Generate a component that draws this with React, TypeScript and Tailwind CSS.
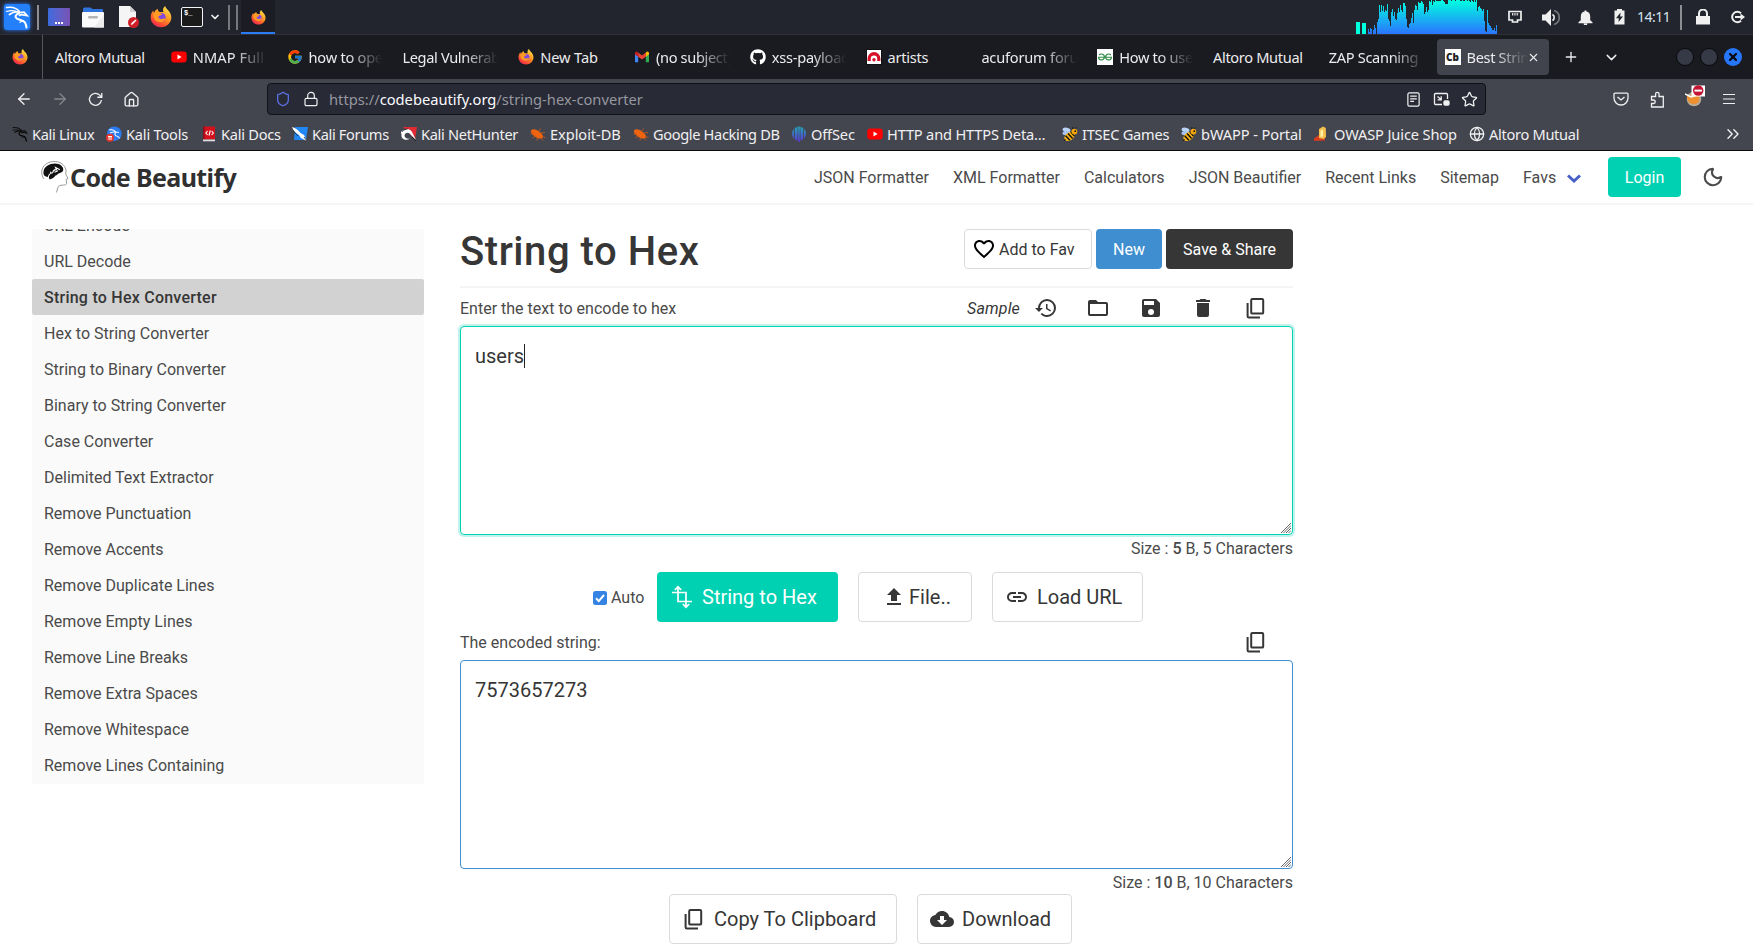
import type { ReactNode } from 'react';
import { ArrowLeft, ArrowRight, ChevronDown, ChevronsRight, Globe, House, Lock, Menu, Moon, Plus, Shield, Star, X } from 'lucide-react';
import { FaGithub } from 'react-icons/fa6';
import { FcGoogle } from 'react-icons/fc';
import { SiGeeksforgeeks } from 'react-icons/si';

/* ---------- icon helpers ---------- */

const PATHS = {
  heart: 'M12.1,18.55L12,18.65L11.89,18.55C7.14,14.24 4,11.39 4,8.5C4,6.5 5.5,5 7.5,5C9.04,5 10.54,6 11.07,7.36H12.93C13.46,6 14.96,5 16.5,5C18.5,5 20,6.5 20,8.5C20,11.39 16.86,14.24 12.1,18.55M16.5,3C14.76,3 13.09,3.81 12,5.08C10.91,3.81 9.24,3 7.5,3C4.42,3 2,5.41 2,8.5C2,12.27 5.4,15.36 10.55,20.03L12,21.35L13.45,20.03C18.6,15.36 22,12.27 22,8.5C22,5.41 19.58,3 16.5,3Z',
  history: 'M13.5,8H12V13L16.28,15.54L17,14.33L13.5,12.25V8M13,3A9,9 0 0,0 4,12H1L4.96,16.03L9,12H6A7,7 0 0,1 13,5A7,7 0 0,1 20,12A7,7 0 0,1 13,19C11.07,19 9.32,18.21 8.06,16.94L6.64,18.36C8.27,20 10.5,21 13,21A9,9 0 0,0 22,12A9,9 0 0,0 13,3',
  folder: 'M20,18H4V8H20M20,6H12L10,4H4C2.89,4 2,4.89 2,6V18A2,2 0 0,0 4,20H20A2,2 0 0,0 22,18V8C22,6.89 21.1,6 20,6Z',
  save: 'M15,9H5V5H15M12,19A3,3 0 0,1 9,16A3,3 0 0,1 12,13A3,3 0 0,1 15,16A3,3 0 0,1 12,19M17,3H5C3.89,3 3,3.9 3,5V19A2,2 0 0,0 5,21H19A2,2 0 0,0 21,19V7L17,3Z',
  trash: 'M19,4H15.5L14.5,3H9.5L8.5,4H5V6H19M6,19A2,2 0 0,0 8,21H16A2,2 0 0,0 18,19V7H6V19Z',
  upload: 'M9,10V16H15V10H19L12,3L5,10H9M19,18H5V20H19V18Z',
  link: 'M3.9,12C3.9,10.29 5.29,8.9 7,8.9H11V7H7A5,5 0 0,0 2,12A5,5 0 0,0 7,17H11V15.1H7C5.29,15.1 3.9,13.71 3.9,12M8,13H16V11H8V13M17,7H13V8.9H17C18.71,8.9 20.1,10.29 20.1,12C20.1,13.71 18.71,15.1 17,15.1H13V17H17A5,5 0 0,0 22,12A5,5 0 0,0 17,7Z',
  cloud: 'M17,13L12,18L7,13H10V9H14V13M19.35,10.03C18.67,6.59 15.64,4 12,4C9.11,4 6.6,5.64 5.35,8.03C2.34,8.36 0,10.9 0,14A6,6 0 0,0 6,20H19A5,5 0 0,0 24,15C24,12.36 21.95,10.22 19.35,10.03Z',
};

function Glyph({ name, className = 'size-6' }: { name: keyof typeof PATHS; className?: string }) {
  return (
    <svg viewBox="0 0 24 24" fill="currentColor" fillRule="evenodd" className={`shrink-0 ${className}`}>
      <path d={PATHS[name]} />
    </svg>
  );
}

function Copy({ className = 'w-[22px] h-6' }: { className?: string }) {
  return (
    <svg viewBox="0 0 22 24" fill="none" stroke="currentColor" strokeWidth="2" className={`shrink-0 ${className}`}>
      <rect x="6.2" y="3" width="12" height="14.6" rx="1.2" />
      <path d="M2.6 7v13.2a1.2 1.2 0 0 0 1.2 1.2H15" />
    </svg>
  );
}

function Transform() {
  return (
    <svg viewBox="0 0 24 24" fill="none" stroke="currentColor" strokeWidth="1.700" className="size-6 shrink-0">
      <path d="M8 2v14.500h14M2 7.500h14V22M4.800 5 8 1.800 11.200 5M12.800 19l3.200 3.200 3.200-3.200" />
    </svg>
  );
}

function Dragon({ className }: { className: string }) {
  return (
    <svg viewBox="0 0 24 24" fill="none" stroke="currentColor" strokeLinecap="round" className={`shrink-0 ${className}`}>
      <path d="M1.500 2.500C7 1.500 12 3.500 14.500 6.500" strokeWidth="1.500" />
      <path d="M1.500 6.500C6 5 10.500 5.500 14 7.500" strokeWidth="1.200" />
      <path d="M4.500 9.500C8 7 12 6.500 15 7.500l4-.3 3 3.300-4-.7c-1.500-.3-3 0-3.500.5" strokeWidth="1.700" />
      <path d="M14 8.500c-3.500.5-4.500 3.500-2 5.200 3 1.600 6.500 1.300 8 3.800 1 2 1.300 3.500 1.500 5" strokeWidth="2" />
      <path d="M19 16.500c-1.500-.6-3 0-4 .8" strokeWidth="1.200" />
    </svg>
  );
}

function Firefox({ className = 'size-4' }: { className?: string }) {
  return (
    <svg viewBox="0 0 32 32" className={`shrink-0 ${className}`}>
      <path
        d="M16 31C7.500 31 1 24.500 1 16.500c0-4.500 1.500-7.500 3.800-10 0 1.800.5 2.800 1.200 3.500C7 7 9 5 11.300 4c-.2 2 .8 3.800 2.700 4.600h5.500C18 5 19.500 2 22 0c.5 4.500 9 7.500 9 16.500C31 24.500 24.500 31 16 31z"
        fill="url(#fire)"
      />
      <circle cx="16.500" cy="16.500" r="6.300" fill="#8149dc" />
      <path d="M5 10c3-2 6.500-1.800 9.500.3l3 1.200c0 2-3.500 2-5 3.500-1 1.300.3 3.500 2.500 4 3 .6 5-1.500 7.500-.5-1.500 4-5 5.500-9 4.800C7 22 4 17 5 10z" fill="#ff9a24" />
    </svg>
  );
}

function YouTube() {
  return (
    <svg viewBox="0 0 16 16" className="size-4 shrink-0">
      <rect x="0.3" y="2.5" width="15.4" height="11" rx="3" fill="#f00" />
      <path d="M6.5 5.6v4.8L10.6 8z" fill="#fff" />
    </svg>
  );
}

function Gmail() {
  return (
    <svg viewBox="0 0 16 16" className="size-4 shrink-0">
      <path d="M1 4v9.3h3.2V7z" fill="#4285f4" />
      <path d="M15 4v9.3h-3.2V7z" fill="#34a853" />
      <path d="M4.2 3.5 8 6.5l3.8-3v4.2L8 10.6 4.2 7.7z" fill="#ea4335" />
      <path d="M1 4a1.6 1.6 0 0 1 2.6-1.1l.6.6v4.2L1 5.4z" fill="#c5221f" />
      <path d="M15 4a1.6 1.6 0 0 0-2.6-1.1l-.6.6v4.2L15 5.4z" fill="#fbbc04" />
    </svg>
  );
}

function Acunetix() {
  return (
    <svg viewBox="0 0 16 16" className="size-4 shrink-0">
      <rect x="0.5" y="0.5" width="15" height="15" fill="#fff" stroke="#111" />
      <path d="M1.6 12V9.5a6.4 6.4 0 0 1 12.8 0V12h-3.2V9.6a3.2 3.2 0 0 0-6.4 0V12z" fill="#d8112a" />
      <circle cx="8" cy="10.8" r="1.7" fill="#d8112a" />
    </svg>
  );
}

function Geeks() {
  return (
    <span className="flex size-4 shrink-0 items-center justify-center bg-white text-[#2f8d46]">
      <SiGeeksforgeeks className="size-3.5" />
    </span>
  );
}

function Bee() {
  return (
    <svg viewBox="0 0 16 16" className="size-4 shrink-0">
      <ellipse cx="4.5" cy="3.8" rx="4" ry="2.2" fill="#b9d4fb" transform="rotate(12 4.5 3.8)" />
      <ellipse cx="4.2" cy="7" rx="3.8" ry="2" fill="#a5c5f5" transform="rotate(-8 4.2 7)" />
      <ellipse cx="7.5" cy="10.5" rx="5.6" ry="3.9" fill="#f8b316" transform="rotate(-35 7.5 10.5)" />
      <path d="m3.6 9.8 4.3 4.4M6 7.6l4.6 4.9M9 6l3.4 4" stroke="#17130c" strokeWidth="1.5" />
      <circle cx="12.4" cy="5.6" r="2.9" fill="#f3a60f" />
      <circle cx="13.3" cy="5.2" r="0.9" fill="#17130c" />
      <path d="m10.5 3 .6-2M13 2.8l1.4-1.5M3.5 13 2 15" stroke="#17130c" strokeWidth="0.9" />
    </svg>
  );
}

function Exploit() {
  return (
    <svg viewBox="0 0 16 16" className="size-4 shrink-0">
      <path d="M1.300 4C3 2.500 6 3.300 8.400 5c2.600 1.800 5 4 4.600 6-.6 1.800-3.400 2-6 .7C4 10.300-.3 6.800 1.300 4z" fill="#ef6410" />
      <path d="M.5 8h3M2.500 12l3-2M7 14.500l.5-3M9 5l1.500-2.500M11 7l4-.5M12 10.500l3.500 1M11 12l2 2.500" stroke="#c4581a" strokeWidth="0.900" fill="none" />
    </svg>
  );
}

function KaliTools() {
  return (
    <svg viewBox="0 0 16 16" className="size-4 shrink-0">
      <circle cx="8.300" cy="7.700" r="7.300" fill="#2b7cf0" />
      <path d="M3 4c3-1 5 0 7 2l3 .5M4 7c2-1 4-1.500 6-.5-2 1-1 3 .5 3.500 1.500.3 2.500 1 3 2.500" stroke="#e8f1ff" strokeWidth="1.200" fill="none" />
      <circle cx="4" cy="11.800" r="4" fill="#e5352d" />
      <path d="M2 10.500h4M3.100 10.500v3.500M5 10.500v3.500" stroke="#fff" strokeWidth="1" />
    </svg>
  );
}

function KaliDocs() {
  return (
    <svg viewBox="0 0 16 16" className="size-4 shrink-0">
      <rect x="2" y="0.500" width="12" height="13" fill="#d4121e" />
      <rect x="2" y="0.500" width="1.600" height="13" fill="#8d0f1b" />
      <rect x="2" y="13.500" width="12" height="1.800" fill="#ddd" />
      <path d="M6.600 5 4.800 7l1.800 2M10.600 5l1.800 2-1.800 2M9.300 4.500 8 9.500" stroke="#fff" strokeWidth="1.100" fill="none" />
    </svg>
  );
}

function KaliForums() {
  return (
    <svg viewBox="0 0 16 16" className="size-4 shrink-0">
      <path d="M3 1h13l-2 13H2z" fill="#2087f5" />
      <path d="M0 1c3 1 6 2.500 8.500 6L12 9l3 6-6-3-2-3C4 7 1.500 5 0 1z" fill="#fff" />
      <path d="m1 5 5 5M12 11l3 4" stroke="#222" strokeWidth="0.800" />
    </svg>
  );
}

function NetHunter() {
  return (
    <svg viewBox="0 0 16 16" className="size-4 shrink-0">
      <path d="M2 1h14l-2 12L8 7z" fill="#e12a33" />
      <path d="M0 6c3-4 9-4 11 0l4 8-5-5C8 6 4 6 3.500 9.500 3.500 12 6 13 9 12.500c-4 3-9 .5-8.500-3.500z" fill="#fff" />
      <path d="M1 5.500C3 3.500 5 3 6.500 3M11 11l4 4" stroke="#1a1a1a" strokeWidth="1" fill="none" />
    </svg>
  );
}

function OffSec() {
  return (
    <svg viewBox="0 0 16 16" className="size-4 shrink-0" fill="url(#offsec)">
      <path d="M3 2.800v10A7.300 7.300 0 0 1 3 2.800zM3.800 2l2.800-1.200v13.800L3.800 13.600zM7.200.5h1.600v15.500H7.200zM9.400.8 12.200 2v11.600l-2.800 1zM13 2.800a7.300 7.300 0 0 1 0 10z" />
    </svg>
  );
}

function Juice() {
  return (
    <svg viewBox="0 0 16 16" className="size-4 shrink-0">
      <path d="M0 12.500 5 9l6 1.500v4L0 15z" fill="#d63c1f" />
      <path d="M5 3 9 .5l2.800 1.500.2 9-2.500 2L5 12z" fill="#f3c14b" />
      <path d="M6.500 4.500 9 3.500v7l-2.500.5z" fill="#fdf0a8" />
    </svg>
  );
}

function CbIcon() {
  return (
    <span className="flex size-4 shrink-0 items-center justify-center bg-white font-['Open_Sans',sans-serif] text-[10px] font-extrabold leading-none text-[#222]">
      Cb
    </span>
  );
}

/* ---------- desktop panel ---------- */

const LOAD = [
  5, 2, 6, 5, 0, 4, 9, 6, 0, 12, 15, 29, 22, 29, 23, 28, 22, 24, 23, 30, 15, 13, 8, 22, 25, 18, 22, 15, 14, 21, 26, 22,
  29, 24, 22, 31, 31, 28, 15, 7, 6, 10, 11, 16, 21, 11, 24, 29, 28, 24, 32, 31, 31, 33, 32, 30, 20, 22, 27, 22, 24, 33,
  32, 34, 29, 33, 32, 34, 33, 33, 33, 33, 33, 34, 34, 33, 32, 30, 30, 30, 34, 34, 34, 33, 34, 34, 34, 33, 34, 34, 34, 34,
  33, 33, 34, 33, 33, 34, 34, 33, 34, 33, 32, 34, 33, 32, 34, 32, 34, 23, 27, 28, 26, 25, 23, 25, 13, 3, 2, 24, 11, 9,
  8, 6, 4, 4, 6, 3, 9, 12,
];

function LoadGraph() {
  return (
    <svg viewBox="0 0 141 34" className="h-[34px] w-[141px] shrink-0" shapeRendering="crispEdges">
      <rect x="0" y="22" width="4" height="12" fill="#00ffdd" />
      <rect x="6" y="23" width="4" height="11" fill="#00ffdd" />
      <path d={LOAD.map((h, i) => `M${12 + i} 34v-${h}h1v${h}z`).join('')} fill="url(#load)" />
    </svg>
  );
}

function Panel() {
  return (
    <div className="flex h-[35px] shrink-0 items-center border-b border-[#303136] bg-[#23252e] text-[#f0f0f0]">
      <div className="ml-1 flex size-[26px] items-center justify-center rounded-[3px] bg-[#2480fa] shadow-[0_0_4px_#2a7bff]">
        <Dragon className="size-6 text-white" />
      </div>
      <div className="ml-[7px] h-[25px] w-[2px] bg-[#8d8e93]" />
      <div className="ml-[9px] flex h-[18px] w-[22px] items-end justify-center gap-px rounded-[1px] bg-linear-to-r from-[#3a6bdf] to-[#7852b4] pb-[2px]">
        <i className="size-[2px] bg-white" />
        <i className="size-[2px] bg-white" />
        <i className="size-[2px] bg-white" />
      </div>
      <svg viewBox="0 0 22 21" className="ml-3 h-[21px] w-[22px]">
        <path d="M1 7V2a1.500 1.500 0 0 1 1.500-1.500h6L10.500 2H20a1 1 0 0 1 1 1v4z" fill="#2f74dd" />
        <rect x="0" y="5" width="22" height="15.500" rx="1" fill="#fafafa" />
        <path d="M22 8v12.500H12z" fill="#ececec" />
        <rect x="6" y="9" width="10" height="2.400" rx="1.200" fill="#b5b5b5" />
      </svg>
      <svg viewBox="0 0 22 22" className="ml-3.5 h-[22px] w-[22px]">
        <path d="M1 0h11l6 6v15H1z" fill="#f5f5f5" />
        <path d="m12 0 6 6h-6z" fill="#d0d0d0" />
        <circle cx="15.500" cy="16.500" r="5.500" fill="#cf2027" />
        <path d="m13 19 .5-2 4-3.500 1 1-4 4z" fill="#fff" />
      </svg>
      <Firefox className="ml-2.5 size-[22px]" />
      <div className="ml-[9px] h-5 w-[22px] rounded-[2px] border border-[#f4f4f4] bg-[#1b1b1b] pl-0.5 pt-px font-['Liberation_Mono',monospace] text-[7px] font-bold leading-[9px] text-white">
        $_
      </div>
      <ChevronDown className="ml-[6px] size-3" strokeWidth={3.500} />
      <div className="ml-[7px] h-[25px] w-[2px] bg-[#77787d]" />
      <div className="ml-[6px] h-[25px] w-[2px] bg-[#77787d]" />
      <div className="ml-[3px] flex h-[34px] w-[34px] items-center justify-center border-b-2 border-[#2a7bf5] bg-[#1c1d24] pt-0.5">
        <Firefox className="size-[15px]" />
      </div>
      <div className="ml-auto flex items-center">
        <LoadGraph />
        <svg viewBox="0 0 14 14" className="ml-[11px] h-[14px] w-[14px]" fill="none" stroke="currentColor">
          <path d="M1 1.500h12v8.500h-3.500v2h-5v-2h-3.500z" strokeWidth="1.700" />
          <path d="M4.500 3v2.500M6.200 3v2.500M7.900 3v2.500M9.600 3v2.500" strokeWidth="0.900" />
        </svg>
        <svg viewBox="0 0 18 17" className="ml-[20px] h-[17px] w-[18px]">
          <path d="M0 5.500h3.500L9 0v17l-5.500-5.500H0z" fill="#f0f0f0" />
          <path d="M10.500 5.500a3.500 3.500 0 0 1 0 6" stroke="#f0f0f0" strokeWidth="1.600" fill="none" />
          <path d="M12 1.500a7.300 7.300 0 0 1 0 14" stroke="#77787d" strokeWidth="1.700" fill="none" />
        </svg>
        <svg viewBox="0 0 16 16" className="ml-[18px] size-[15px]" fill="currentColor">
          <path d="M7 .5h2v1.200c2.500.5 4 2.300 4 5V11l2.500 2v1H.5v-1L3 11V6.700c0-2.700 1.500-4.500 4-5zM6 14.500h4a2 2 0 0 1-4 0z" />
        </svg>
        <svg viewBox="0 0 11 16" className="ml-[21px] h-4 w-[11px]">
          <path d="M3 0h5v1.500h2.500V15.500H.5V1.500H3z" fill="#f0f0f0" />
          <path d="M6.500 3.500 2 9.200h2.800L4.500 13 9 7.500H6.200z" fill="#23252e" />
        </svg>
        <span className="ml-[12px] w-[32px] whitespace-nowrap font-['Noto_Sans',sans-serif] text-[14px] leading-none tracking-[-0.500px] text-[#d5e2ec]">14:11</span>
        <div className="ml-[11px] h-[25px] w-[2px] bg-[#8d8e93]" />
        <svg viewBox="0 0 14 16" className="ml-[14px] h-4 w-[14px]" fill="currentColor">
          <path d="M0 7h2V4.500a5 5 0 0 1 10 0V7h2v8.500H0zM4 7h6V4.500a3 3 0 0 0-6 0z" />
        </svg>
        <svg viewBox="0 0 15 14" className="ml-[20px] mr-[8px] h-[14px] w-[15px]">
          <path d="M11 3.300A5.200 5.200 0 1 0 11 10.700" fill="none" stroke="#f0f0f0" strokeWidth="2" />
          <path d="M5 6h5.500V3.500L15 7l-4.500 3.500V8H5z" fill="#f0f0f0" />
        </svg>
      </div>
    </div>
  );
}

/* ---------- browser chrome ---------- */

const TABS: { title: string; icon?: ReactNode; fade?: boolean; tracking: string }[] = [
  { title: 'Altoro Mutual', tracking: 'tracking-[-0.330px]' },
  { title: 'NMAP Full', icon: <YouTube />, fade: true, tracking: 'tracking-[0.100px]' },
  { title: 'how to ope', icon: <FcGoogle className="size-4 shrink-0" />, fade: true, tracking: 'tracking-[-0.250px]' },
  { title: 'Legal Vulnerab', fade: true, tracking: 'tracking-[-0.350px]' },
  { title: 'New Tab', icon: <Firefox />, tracking: 'tracking-[-0.100px]' },
  { title: '(no subject)', icon: <Gmail />, fade: true, tracking: 'tracking-[-0.350px]' },
  { title: 'xss-payloac', icon: <FaGithub className="size-4 shrink-0 text-white" />, fade: true, tracking: 'tracking-[-0.250px]' },
  { title: 'artists', icon: <Acunetix />, tracking: 'tracking-[-0.250px]' },
  { title: 'acuforum foru', fade: true, tracking: 'tracking-[-0.200px]' },
  { title: 'How to use', icon: <Geeks />, fade: true, tracking: 'tracking-[-0.300px]' },
  { title: 'Altoro Mutual', tracking: 'tracking-[-0.330px]' },
  { title: 'ZAP Scanning', fade: true, tracking: 'tracking-[-0.330px]' },
];

function TabBar() {
  return (
    <div className="flex h-[44px] shrink-0 items-center bg-[#1a1b20] text-[14.600px] text-[#ececee]">
      <div className="flex h-full w-[43px] shrink-0 items-center border-r border-[#55565c] pl-3">
        <Firefox />
      </div>
      <div className="ml-[2px] flex h-full shrink-0">
        {TABS.map((t, i) => (
          <div key={i} className={`flex w-[115.800px] items-center gap-[6px] px-[10px] ${t.tracking}`}>
            {t.icon}
            <span
              className={
                t.fade
                  ? 'min-w-0 flex-1 whitespace-nowrap [mask-image:linear-gradient(to_left,transparent,black_34px)]'
                  : 'whitespace-nowrap'
              }
            >
              {t.title}
            </span>
          </div>
        ))}
      </div>
      <div className="ml-[2px] flex h-9 w-[112px] shrink-0 items-center rounded-[4px] bg-[#42444d] pl-2">
        <CbIcon />
        <span className="ml-[6px] w-[61px] whitespace-nowrap tracking-[-0.350px] [mask-image:linear-gradient(to_left,transparent,black_34px)]">
          Best Strin
        </span>
        <X className="-ml-px size-[13px] shrink-0" strokeWidth={2} />
      </div>
      <Plus className="ml-[14px] size-4 shrink-0" strokeWidth={2} />
      <ChevronDown className="ml-[24px] size-[17px] shrink-0" strokeWidth={2} />
      <div className="ml-auto mr-[11px] flex gap-[6px] pb-px">
        <i className="size-[18px] rounded-full border border-[#090a0c] bg-[#363a47]" />
        <i className="size-[18px] rounded-full border border-[#090a0c] bg-[#363a47]" />
        <i className="flex size-[18px] items-center justify-center rounded-full bg-[#2777fa] text-[#090a10]">
          <X className="size-3" strokeWidth={4.500} />
        </i>
      </div>
    </div>
  );
}

function Toolbar() {
  return (
    <div className="flex h-[40px] shrink-0 items-center text-[#f0f0f2]">
      <ArrowLeft className="ml-[15px] size-[18px]" strokeWidth={1.700} />
      <ArrowRight className="ml-[18px] size-[18px] text-[#85868c]" strokeWidth={1.700} />
      <svg viewBox="0 0 16 16" className="ml-[19px] size-[15px]" fill="none" stroke="currentColor" strokeWidth="1.400">
        <path d="M14.300 8.500A6.400 6.400 0 1 1 12.500 3.300l2 2M14.700 1v4.600h-4.700" />
      </svg>
      <House className="ml-[20px] size-[17px]" strokeWidth={1.900} />
      <div className="ml-[127px] flex h-8 w-[1219px] items-center rounded-[4px] border border-[#101116] bg-[#282a36] pr-[7px]">
        <Shield className="ml-[7px] size-4 text-[#5c6fe0]" strokeWidth={2} />
        <Lock className="ml-[12px] size-4" strokeWidth={1.800} />
        <span className="ml-[10px] whitespace-nowrap text-[14.700px] text-[#96979f]">
          https://<span className="text-[#fbfbfe]">codebeautify.org</span>/string-hex-converter
        </span>
        <svg viewBox="0 0 16 16" className="ml-auto size-[15px]" fill="none" stroke="currentColor" strokeWidth="1.300">
          <rect x="2" y="1" width="12" height="14" rx="1.500" />
          <path d="M4.500 4.500h7M4.500 7.300h7M4.500 10h4" />
        </svg>
        <svg viewBox="0 0 17 16" className="ml-[12px] h-4 w-[17px]" fill="none" stroke="currentColor" strokeWidth="1.300">
          <path d="M9 13.500H2.500a1 1 0 0 1-1-1v-9a1 1 0 0 1 1-1h11a1 1 0 0 1 1 1V8M4.500 5.500l3.500 3M8.200 5.200v3.600H4.600" />
          <rect x="11" y="10" width="5" height="4" rx="1" fill="currentColor" />
        </svg>
        <Star className="ml-[11px] size-[17px]" strokeWidth={1.800} />
      </div>
      <svg viewBox="0 0 16 16" className="ml-[127px] size-[16px]" fill="none" stroke="currentColor" strokeWidth="1.300">
        <path d="M1 3.200a1 1 0 0 1 1-1h12a1 1 0 0 1 1 1V7A7 7 0 0 1 1 7zM4.500 6 8 9l3.500-3" />
      </svg>
      <svg viewBox="0 0 16 17" className="ml-[20px] h-[17px] w-4" fill="none" stroke="currentColor" strokeWidth="1.300">
        <path d="M2.500 16h11.800V5.500H10V3a1.700 1.700 0 0 0-3.400 0v2.500H2.500V9h2a1.700 1.700 0 0 1 0 3.500h-2z" />
      </svg>
      <svg viewBox="0 0 20 22" className="-mt-[6px] ml-[20px] h-[22px] w-5">
        <circle cx="9" cy="14" r="7.300" fill="#b9aa93" />
        <path d="M2 11c4 1 6-3 12 0 1 5-1 8-5 8S2 16 2 11z" fill="#ef8f2e" />
        <path d="m0 9 6 3 6-2" stroke="#fff" strokeWidth="1.500" fill="none" />
        <rect x="6.500" y="0.500" width="13.500" height="11" fill="#fff" />
        <circle cx="13.200" cy="5.500" r="5.200" fill="#c31432" />
        <rect x="9.500" y="4.600" width="7.400" height="2" fill="#fff" />
      </svg>
      <svg viewBox="0 0 12 12" className="ml-[18px] size-3" stroke="currentColor" strokeWidth="1.200">
        <path d="M0 1.500h12M0 6h12M0 10.500h12" />
      </svg>
    </div>
  );
}

function Bookmark({ icon, label, className }: { icon: ReactNode; label: string; className: string }) {
  return (
    <div className={`flex shrink-0 items-center gap-1 whitespace-nowrap ${className}`}>
      {icon}
      <span>{label}</span>
    </div>
  );
}

function Bookmarks() {
  return (
    <div className="flex h-[32px] shrink-0 items-center border-b border-[#0b0b0e] pb-[2px] pl-3 text-[14.600px] text-[#f0f0f2]">
      <Bookmark className="w-[94px] tracking-[-0.330px]" icon={<Dragon className="size-4 text-[#0a0a0a]" />} label="Kali Linux" />
      <Bookmark className="w-[95px] tracking-[-0.200px]" icon={<KaliTools />} label="Kali Tools" />
      <Bookmark className="w-[91px] tracking-[-0.250px]" icon={<KaliDocs />} label="Kali Docs" />
      <Bookmark className="w-[109px] tracking-[-0.350px]" icon={<KaliForums />} label="Kali Forums" />
      <Bookmark className="w-[129px] tracking-[-0.320px]" icon={<NetHunter />} label="Kali NetHunter" />
      <Bookmark className="w-[103px] tracking-[-0.050px]" icon={<Exploit />} label="Exploit-DB" />
      <Bookmark className="w-[158px] tracking-[-0.350px]" icon={<Exploit />} label="Google Hacking DB" />
      <Bookmark className="w-[76px] tracking-[-0.150px]" icon={<OffSec />} label="OffSec" />
      <Bookmark className="w-[195px] tracking-[-0.170px]" icon={<YouTube />} label="HTTP and HTTPS Deta…" />
      <Bookmark className="w-[119px] tracking-[-0.250px]" icon={<Bee />} label="ITSEC Games" />
      <Bookmark className="w-[133px] tracking-[-0.100px]" icon={<Bee />} label="bWAPP - Portal" />
      <Bookmark className="w-[155px] tracking-[-0.120px]" icon={<Juice />} label="OWASP Juice Shop" />
      <Bookmark className="w-[140px] tracking-[-0.300px]" icon={<Globe className="size-4 shrink-0" strokeWidth={1.900} />} label="Altoro Mutual" />
      <ChevronsRight className="ml-auto mr-[10px] size-5" strokeWidth={1.700} />
    </div>
  );
}

/* ---------- page ---------- */

function Logo() {
  return (
    <div className="ml-[41px] flex items-center text-[#303030]">
      <svg viewBox="0 0 30 34" className="h-[34px] w-[29px]">
        <path
          d="M3 19C-.5 14 0 8 4.500 4c6-4.500 15-4 19 1 3 3.500 2.500 6.500 2 9l2.500 4.500-2 1 .5 4-1 1.500c-3 1-7-.5-8 3L16 33"
          fill="none"
          stroke="#8a8a8a"
          strokeWidth="0.900"
        />
        <path
          d="M2.500 12.500C2.500 6 9 3 14.500 3c5 0 9 3 8.500 7-.5 2-2.500 2.500-4 3-2 .5-2.500 2-4 2.500-1 2-3.500 3.500-6 4-.5-1-1-2-2-2.500C4 16.500 2.500 15 2.500 12.500z"
          fill="#111"
        />
        <path d="M7.500 18c0-3.500 2-5 4.500-5.500 1-3 2-3.500 4-3L15 7l4.500 2.500M10.500 13l-1-1.500M14 12l3.500-1.500" stroke="#fff" strokeWidth="1.100" fill="none" />
      </svg>
      <span className="font-['Noto_Sans',sans-serif] text-[25px] font-bold leading-none tracking-[-0.600px]">Code Beautify</span>
    </div>
  );
}

const NAV = ['JSON Formatter', 'XML Formatter', 'Calculators', 'JSON Beautifier', 'Recent Links', 'Sitemap'];

function Header() {
  return (
    <header className="flex h-[54px] shrink-0 items-center border-b-2 border-[#f5f5f5] text-[#4a4a4a]">
      <Logo />
      <nav className="ml-auto flex items-center gap-6 whitespace-nowrap">
        {NAV.map((n) => (
          <a key={n} className="pt-[2px]">{n}</a>
        ))}
        <a className="flex w-[61px] items-center justify-between pt-[2px]">
          Favs
          <svg viewBox="0 0 14 9" className="mr-[3px] h-[9px] w-[14px]" fill="none" stroke="#485fc7" strokeWidth="3">
            <path d="m1 1.500 6 5.500 6-5.500" />
          </svg>
        </a>
        <button className="h-10 w-[73px] rounded-[4px] bg-[#00d1b2] pt-px text-white">Login</button>
      </nav>
      <Moon className="ml-[21px] mr-[29px] size-[22px]" strokeWidth={2.300} />
    </header>
  );
}

const LINKS = [
  'URL Encode',
  'URL Decode',
  'String to Hex Converter',
  'Hex to String Converter',
  'String to Binary Converter',
  'Binary to String Converter',
  'Case Converter',
  'Delimited Text Extractor',
  'Remove Punctuation',
  'Remove Accents',
  'Remove Duplicate Lines',
  'Remove Empty Lines',
  'Remove Line Breaks',
  'Remove Extra Spaces',
  'Remove Whitespace',
  'Remove Lines Containing',
];

function Sidebar() {
  return (
    <aside className="ml-8 h-[555px] w-[392px] shrink-0 overflow-hidden bg-[#fafafa]">
      <ul className="-mt-[22px]">
        {LINKS.map((l, i) => (
          <li
            key={l}
            className={
              i === 2
                ? 'flex h-9 items-center rounded-[2px] bg-[#d2d2d2] px-3 pt-[2px] font-medium tracking-[0.240px] text-[#363636]'
                : 'flex h-9 items-center px-3 pt-[2px] text-[#4a4a4a]'
            }
          >
            {l}
          </li>
        ))}
      </ul>
    </aside>
  );
}

function Grip() {
  return (
    <svg viewBox="0 0 11 11" className="absolute bottom-px right-px size-[11px]" stroke="#555" strokeWidth="0.900">
      <path d="M1 11 11 1M3.500 11 11 3.500M6 11l5-5M8.500 11 11 8.500" />
    </svg>
  );
}

function BigButton({ className, children }: { className: string; children: ReactNode }) {
  return (
    <button
      className={`flex h-[50px] items-center whitespace-nowrap rounded-[4px] text-[20px] ${className}`}
    >
      {children}
    </button>
  );
}

function Main() {
  return (
    <main className="ml-9 flex w-[833px] flex-col text-[#4a4a4a]">
      <div className="flex h-[59px] items-start border-b-2 border-[#f5f5f5]">
        <h1 className="mt-[-2px] text-[40px] font-medium leading-[50px] tracking-[0.550px] text-[#363636]">String to Hex</h1>
        <div className="ml-auto flex gap-1 text-[#363636]">
          <button className="flex h-10 w-[128px] items-center rounded-[4px] border border-[#dbdbdb] pl-[7px]">
            <Glyph name="heart" className="size-6 text-black" />
            <span className="ml-[3px] pt-[2px]">Add to Fav</span>
          </button>
          <button className="h-10 w-[66px] rounded-[4px] bg-[#3e8ed0] pt-[2px] text-white">New</button>
          <button className="h-10 w-[127px] rounded-[4px] bg-[#363636] pt-[2px] text-white">Save &amp; Share</button>
        </div>
      </div>
      <div className="flex h-[38px] items-center pb-px pt-[3px]">
        <span className="pt-px">Enter the text to encode to hex</span>
        <div className="ml-auto mr-[26px] flex items-center text-[#363636]">
          <em className="mr-[14px] pt-px tracking-[0.150px]">Sample</em>
          <Glyph name="history" className="mr-[28px] size-6" />
          <Glyph name="folder" className="mr-[29px] size-6" />
          <Glyph name="save" className="mr-[28px] size-6" />
          <Glyph name="trash" className="mr-[30px] size-6" />
          <Copy />
        </div>
      </div>
      <div className="relative h-[209px] shrink-0 rounded-[4px] border border-[#00d1b2] px-[14px] pt-[14px] text-[20px] leading-[30px] text-[#363636] shadow-[0_0_0_2px_rgba(0,209,178,0.25)]">
        <div className="flex items-center">
          users
          <i className="h-6 w-px bg-[#222]" />
        </div>
        <Grip />
      </div>
      <div className="h-[37px] pt-px text-right leading-[26px]">
        Size : <span className="font-medium">5</span> B, 5 Characters
      </div>
      <div className="flex h-[50px] items-center pl-[133px]">
        <svg viewBox="0 0 14 14" className="mt-px size-[14px]">
          <rect width="14" height="14" rx="2.500" fill="#3584e4" />
          <path d="m3 7.300 2.800 2.800L11 4" fill="none" stroke="#fff" strokeWidth="2" />
        </svg>
        <span className="ml-[4px] w-[46px] pt-px">Auto</span>
        <BigButton className="w-[181px] bg-[#00d1b2] pl-[13px] text-white">
          <Transform />
          <span className="ml-2">String to Hex</span>
        </BigButton>
        <BigButton className="ml-5 w-[114px] border border-[#dbdbdb] pl-[23px] text-[#363636]">
          <Glyph name="upload" />
          <span className="ml-[3px]">File..</span>
        </BigButton>
        <BigButton className="ml-5 w-[151px] border border-[#dbdbdb] pl-[12px] text-[#363636]">
          <Glyph name="link" />
          <span className="ml-2">Load URL</span>
        </BigButton>
      </div>
      <div className="flex h-[38px] items-center justify-between pt-[2px]">
        <span className="pt-px">The encoded string:</span>
        <Copy className="mr-[26px] h-6 w-[22px] text-[#363636]" />
      </div>
      <div className="relative h-[209px] shrink-0 rounded-[4px] border border-[#3e8ed0] px-[14px] pt-[14px] text-[20px] leading-[30px] text-[#363636]">
        7573657273
        <Grip />
      </div>
      <div className="h-[25px] pt-px text-right leading-[26px]">
        Size : <span className="font-medium">10</span> B, 10 Characters
      </div>
      <div className="flex pl-[209px]">
        <BigButton className="w-[228px] border border-[#dbdbdb] pl-[13px] text-[#363636]">
          <Copy />
          <span className="ml-[9px]">Copy To Clipboard</span>
        </BigButton>
        <BigButton className="ml-5 w-[155px] border border-[#dbdbdb] pl-[12px] text-[#363636]">
          <Glyph name="cloud" />
          <span className="ml-2">Download</span>
        </BigButton>
      </div>
    </main>
  );
}

export default function App() {
  return (
    <div className="flex h-[944px] w-[1753px] flex-col overflow-hidden bg-white font-['Roboto',sans-serif] text-[16px] leading-6">
      <svg className="absolute size-0">
        <defs>
          <linearGradient id="fire" x1="0.8" y1="0" x2="0.2" y2="1">
            <stop offset="0" stopColor="#ffe84a" />
            <stop offset="0.450" stopColor="#ff9422" />
            <stop offset="0.800" stopColor="#fb4436" />
            <stop offset="1" stopColor="#e6226b" />
          </linearGradient>
          <linearGradient id="load" gradientUnits="userSpaceOnUse" x1="0" y1="0" x2="0" y2="34">
            <stop offset="0" stopColor="#00ffe0" />
            <stop offset="1" stopColor="#2b74ff" />
          </linearGradient>
          <linearGradient id="offsec" x1="0" y1="0" x2="0" y2="1">
            <stop offset="0" stopColor="#20a6b8" />
            <stop offset="1" stopColor="#5a35d6" />
          </linearGradient>
        </defs>
      </svg>
      <Panel />
      <div className="flex shrink-0 flex-col bg-[#44464f] font-['Noto_Sans',sans-serif]">
        <TabBar />
        <Toolbar />
        <Bookmarks />
      </div>
      <Header />
      <div className="flex pt-6">
        <Sidebar />
        <Main />
      </div>
    </div>
  );
}
